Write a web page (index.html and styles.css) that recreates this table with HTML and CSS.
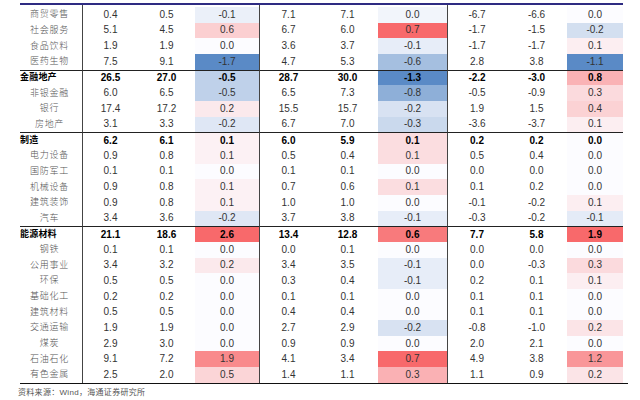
FILE: index.html
```
<!DOCTYPE html>
<html lang="zh-CN">
<head>
<meta charset="utf-8">
<title>行业占比变化</title>
<link rel="stylesheet" href="styles.css">
</head>
<body>
<div class="sheet">
  <div class="table">
    <div class="row sub"><div class="lab">商贸零售</div><div>0.4</div><div>0.5</div><div class="c3 heat">-0.1</div><div>7.1</div><div>7.1</div><div class="c6 heat" data-v="-0.04">0.0</div><div>-6.7</div><div>-6.6</div><div class="c9 heat">0.0</div></div>
    <div class="row sub"><div class="lab">社会服务</div><div>5.1</div><div>4.5</div><div class="c3 heat">0.6</div><div>6.7</div><div>6.0</div><div class="c6 heat">0.7</div><div>-1.7</div><div>-1.5</div><div class="c9 heat">-0.2</div></div>
    <div class="row sub"><div class="lab">食品饮料</div><div>1.9</div><div>1.9</div><div class="c3 heat">0.0</div><div>3.6</div><div>3.7</div><div class="c6 heat">-0.1</div><div>-1.7</div><div>-1.7</div><div class="c9 heat">0.1</div></div>
    <div class="row sub"><div class="lab">医药生物</div><div>7.5</div><div>9.1</div><div class="c3 heat">-1.7</div><div>4.7</div><div>5.3</div><div class="c6 heat">-0.6</div><div>2.8</div><div>3.8</div><div class="c9 heat">-1.1</div></div>
    <div class="row sec"><div class="lab">金融地产</div><div>26.5</div><div>27.0</div><div class="c3 heat">-0.5</div><div>28.7</div><div>30.0</div><div class="c6 heat">-1.3</div><div>-2.2</div><div>-3.0</div><div class="c9 heat">0.8</div></div>
    <div class="row sub"><div class="lab">非银金融</div><div>6.0</div><div>6.5</div><div class="c3 heat">-0.5</div><div>6.5</div><div>7.3</div><div class="c6 heat">-0.8</div><div>-0.5</div><div>-0.9</div><div class="c9 heat">0.3</div></div>
    <div class="row sub"><div class="lab">银行</div><div>17.4</div><div>17.2</div><div class="c3 heat">0.2</div><div>15.5</div><div>15.7</div><div class="c6 heat">-0.2</div><div>1.9</div><div>1.5</div><div class="c9 heat">0.4</div></div>
    <div class="row sub"><div class="lab">房地产</div><div>3.1</div><div>3.3</div><div class="c3 heat">-0.2</div><div>6.7</div><div>7.0</div><div class="c6 heat">-0.3</div><div>-3.6</div><div>-3.7</div><div class="c9 heat">0.1</div></div>
    <div class="row sec"><div class="lab">制造</div><div>6.2</div><div>6.1</div><div class="c3 heat">0.1</div><div>6.0</div><div>5.9</div><div class="c6 heat">0.1</div><div>0.2</div><div>0.2</div><div class="c9 heat">0.0</div></div>
    <div class="row sub"><div class="lab">电力设备</div><div>0.9</div><div>0.8</div><div class="c3 heat">0.1</div><div>0.5</div><div>0.4</div><div class="c6 heat">0.1</div><div>0.5</div><div>0.4</div><div class="c9 heat">0.0</div></div>
    <div class="row sub"><div class="lab">国防军工</div><div>0.1</div><div>0.1</div><div class="c3 heat">0.0</div><div>0.1</div><div>0.1</div><div class="c6 heat">0.0</div><div>0.0</div><div>0.0</div><div class="c9 heat">0.0</div></div>
    <div class="row sub"><div class="lab">机械设备</div><div>0.9</div><div>0.8</div><div class="c3 heat">0.1</div><div>0.7</div><div>0.6</div><div class="c6 heat">0.1</div><div>0.1</div><div>0.2</div><div class="c9 heat">0.0</div></div>
    <div class="row sub"><div class="lab">建筑装饰</div><div>0.9</div><div>0.8</div><div class="c3 heat">0.1</div><div>1.0</div><div>1.0</div><div class="c6 heat">0.0</div><div>-0.1</div><div>-0.2</div><div class="c9 heat">0.1</div></div>
    <div class="row sub"><div class="lab">汽车</div><div>3.4</div><div>3.6</div><div class="c3 heat">-0.2</div><div>3.7</div><div>3.8</div><div class="c6 heat">-0.1</div><div>-0.3</div><div>-0.2</div><div class="c9 heat">-0.1</div></div>
    <div class="row sec"><div class="lab">能源材料</div><div>21.1</div><div>18.6</div><div class="c3 heat">2.6</div><div>13.4</div><div>12.8</div><div class="c6 heat">0.6</div><div>7.7</div><div>5.8</div><div class="c9 heat">1.9</div></div>
    <div class="row sub"><div class="lab">钢铁</div><div>0.1</div><div>0.1</div><div class="c3 heat">0.0</div><div>0.0</div><div>0.1</div><div class="c6 heat">0.0</div><div>0.0</div><div>0.0</div><div class="c9 heat">0.0</div></div>
    <div class="row sub"><div class="lab">公用事业</div><div>3.4</div><div>3.2</div><div class="c3 heat">0.2</div><div>3.4</div><div>3.5</div><div class="c6 heat">-0.1</div><div>0.0</div><div>-0.3</div><div class="c9 heat">0.3</div></div>
    <div class="row sub"><div class="lab">环保</div><div>0.5</div><div>0.5</div><div class="c3 heat">0.0</div><div>0.3</div><div>0.4</div><div class="c6 heat">-0.1</div><div>0.2</div><div>0.1</div><div class="c9 heat">0.1</div></div>
    <div class="row sub"><div class="lab">基础化工</div><div>0.2</div><div>0.2</div><div class="c3 heat">0.0</div><div>0.1</div><div>0.1</div><div class="c6 heat">0.0</div><div>0.1</div><div>0.1</div><div class="c9 heat">0.0</div></div>
    <div class="row sub"><div class="lab">建筑材料</div><div>0.5</div><div>0.5</div><div class="c3 heat">0.0</div><div>0.4</div><div>0.4</div><div class="c6 heat">0.0</div><div>0.1</div><div>0.1</div><div class="c9 heat">0.0</div></div>
    <div class="row sub"><div class="lab">交通运输</div><div>1.9</div><div>1.9</div><div class="c3 heat">0.0</div><div>2.7</div><div>2.9</div><div class="c6 heat">-0.2</div><div>-0.8</div><div>-1.0</div><div class="c9 heat">0.2</div></div>
    <div class="row sub"><div class="lab">煤炭</div><div>2.9</div><div>3.0</div><div class="c3 heat">0.0</div><div>0.9</div><div>0.9</div><div class="c6 heat">0.0</div><div>2.0</div><div>2.1</div><div class="c9 heat">0.0</div></div>
    <div class="row sub"><div class="lab">石油石化</div><div>9.1</div><div>7.2</div><div class="c3 heat">1.9</div><div>4.1</div><div>3.4</div><div class="c6 heat">0.7</div><div>4.9</div><div>3.8</div><div class="c9 heat">1.2</div></div>
    <div class="row sub"><div class="lab">有色金属</div><div>2.5</div><div>2.0</div><div class="c3 heat">0.5</div><div>1.4</div><div>1.1</div><div class="c6 heat">0.3</div><div>1.1</div><div>0.9</div><div class="c9 heat">0.2</div></div>
  </div>
  <div class="rule"></div>
  <p class="source">资料来源：Wind，海通证券研究所</p>
</div>
<script src="heat.js"></script>
</body>
</html>
```

FILE: styles.css
```
* {
  box-sizing: border-box;
  margin: 0;
  padding: 0;
}

body {
  width: 640px;
  height: 400px;
  overflow: hidden;
  background: #ffffff;
  font-family: "Liberation Sans", "Noto Sans CJK SC", Arial, sans-serif;
  color: #333333;
}

.sheet {
  padding-top: 3px;
}

.table {
  margin-left: 20px;
  width: 603px;
  border-top: 2px solid #2e2b82;
  padding-top: 2px;
  background:
    linear-gradient(#444, #444) 62px 0 / 1px 2px no-repeat,
    linear-gradient(#444, #444) 239px 0 / 1px 2px no-repeat,
    linear-gradient(#444, #444) 427px 0 / 1px 2px no-repeat;
}

.row {
  display: grid;
  grid-template-columns: 63px 55px 57px 65px 57px 61px 70px 58px 61px 56px;
  height: 15.667px;
}

.row > div {
  display: flex;
  align-items: center;
  justify-content: center;
  font-size: 10px;
  line-height: 1;
  white-space: nowrap;
}

.lab,
.c3,
.c6 {
  border-right: 1px solid #444444;
}

.row > .lab {
  font-family: "Liberation Sans", "Noto Sans CJK SC", sans-serif;
  font-size: 9px;
}

.sub .lab {
  padding-right: 3px;
  letter-spacing: 0.7px;
  color: #555555;
  font-weight: 300;
}

.sec > div {
  border-top: 1px solid #222222;
  font-weight: bold;
  color: #000000;
}

.sec > .lab {
  justify-content: flex-start;
  letter-spacing: 0.2px;
}

.rule {
  margin-left: 20px;
  width: 608px;
  border-top: 1px solid #111111;
}

.source {
  margin: 4px 0 0 18px;
  font-size: 8px;
  line-height: 10px;
  letter-spacing: 0.3px;
  color: #555555;
}
```

FILE: heat.js
```
(function () {
  var base = [252, 252, 255];
  var red = [248, 105, 107];
  var blue = [90, 138, 198];
  ['c3', 'c6', 'c9'].forEach(function (k) {
    var cells = [].slice.call(document.querySelectorAll('.heat.' + k));
    var vals = cells.map(function (c) {
      return parseFloat(c.getAttribute('data-v') || c.textContent);
    });
    var mx = Math.max.apply(null, vals);
    var mn = Math.min.apply(null, vals);
    cells.forEach(function (c, i) {
      var v = vals[i];
      var t, tgt;
      if (v >= 0) {
        t = mx > 0 ? v / mx : 0;
        tgt = red;
      } else {
        t = mn < 0 ? v / mn : 0;
        tgt = blue;
      }
      t = Math.pow(t, 0.8);
      var rgb = base.map(function (b, j) {
        return Math.round(b + (tgt[j] - b) * t);
      });
      c.style.backgroundColor = 'rgb(' + rgb.join(',') + ')';
    });
  });
})();
```
